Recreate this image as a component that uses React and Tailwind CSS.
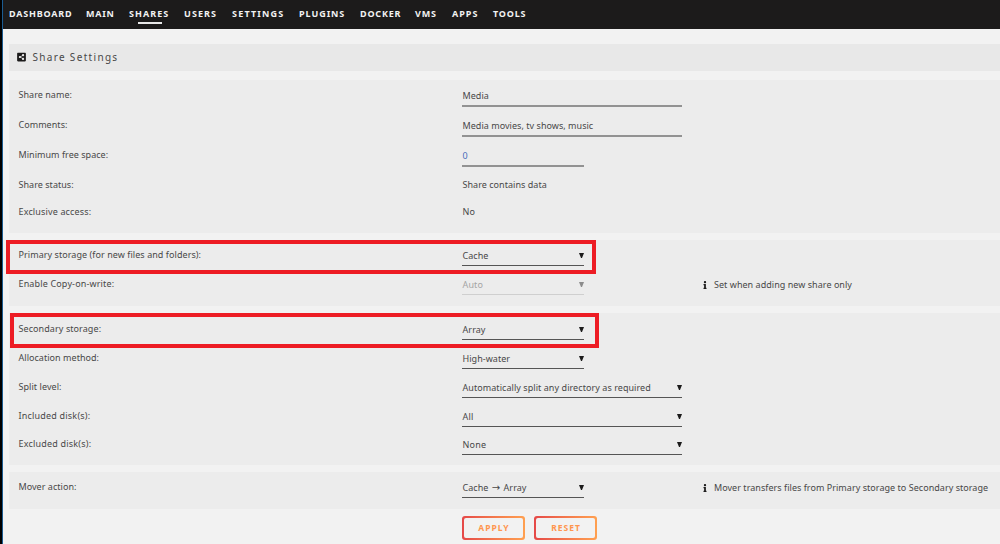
import React from "react";
import { FaShareAltSquare, FaInfo } from "react-icons/fa";

const navItems = [
  { name: "DASHBOARD", className: "w-[77px]" },
  { name: "MAIN", className: "w-[43px]" },
  { name: "SHARES", className: "w-[55px] tracking-[1.05px]", active: true },
  { name: "USERS", className: "w-[48px] tracking-[1.1px]" },
  { name: "SETTINGS", className: "w-[67px] tracking-[1.2px]" },
  { name: "PLUGINS", className: "w-[61px] tracking-[0.95px]" },
  { name: "DOCKER", className: "w-[55px]" },
  { name: "VMS", className: "w-[37px]" },
  { name: "APPS", className: "w-[41px] tracking-[1px]" },
  { name: "TOOLS", className: "w-[40px]" },
];

const Panel = ({ className, children }) => (
  <section className={`relative bg-[#ececec] ${className}`}>{children}</section>
);

const Row = ({ label, className, children, help }) => (
  <div className={`flex items-start pl-[9.5px] ${className}`}>
    <div className="w-[443.5px] shrink-0 leading-[20px]">{label}</div>
    <div className="w-[240px] shrink-0">{children}</div>
    {help && (
      <div className="flex items-center leading-[21px] whitespace-nowrap tracking-[0.04px]">
        <FaInfo className="w-[6px] h-[8px] mr-[6px] text-[#1c1b1b]" />
        <span>{help}</span>
      </div>
    )}
  </div>
);

const Field = ({ value, wide }) => (
  <div
    className={`h-[22px] border-b-2 border-[#929292] pl-[0.5px] leading-[21px] ${wide ? "w-[220px]" : "w-[122px]"}`}
  >
    {value}
  </div>
);

const Select = ({ value, wide, disabled }) => (
  <div
    className={`flex items-start justify-between h-[21px] border-b pl-[0.5px] leading-[21px] ${wide ? "w-[220px]" : "w-[122px]"} ${
      disabled ? "border-[#cfcfcf] text-[#a5a5a5]" : "border-[#555]"
    }`}
  >
    <span>{value}</span>
    <svg
      viewBox="0 0 5 5"
      className={`w-[5px] h-[5px] mt-[8px] ${disabled ? "fill-[#8c8c8c]" : "fill-[#1c1b1b]"}`}
    >
      <path d="M0 0h5L3 5H2z" />
    </svg>
  </div>
);

const Highlight = ({ className }) => (
  <div className={`absolute border-4 border-[#ed1c24] pointer-events-none ${className}`} />
);

const Button = ({ children }) => (
  <button className="w-[63px] h-[24px] rounded-[3px] p-[2px] bg-gradient-to-r from-[#e54848] to-[#ffa050]">
    <span className="flex items-center justify-center w-full h-full rounded-[2px] bg-[#f2f2f2] pl-[1px] text-[8.5px] font-bold tracking-[1px] text-[#ff964f]">
      {children}
    </span>
  </button>
);

const App = () => {
  return (
    <div className="flex w-[1000px] h-[544px] overflow-hidden bg-[#f2f2f2] font-['Noto_Sans',sans-serif] text-[9px] tracking-[0.04px] text-[#484848]">
      <div className="w-[3px] shrink-0 bg-black border-r border-[#1b5c91]" />
      <div className="flex-1 min-w-0">
        <nav className="flex h-[29px] pl-[6px] bg-[#1c1b1b] text-[#f2f2f2] text-[9px] font-bold tracking-[0.8px]">
          {navItems.map((item) => (
            <a key={item.name} className={`shrink-0 pt-[4px] leading-[20px] ${item.className}`}>
              {item.name}
              {item.active && <div className="w-[24px] h-[2px] -mt-[2px] ml-[9px] bg-[#e8e8e8]" />}
            </a>
          ))}
        </nav>

        <main className="pl-[6px] pt-[15px]">
          <header className="flex items-center h-[27px] pl-[7.5px] bg-[#e8e8e8]">
            <FaShareAltSquare className="w-[9px] h-[10px] -mt-px text-[#1c1b1b]" />
            <h1 className="ml-[7px] text-[10px] tracking-[1.32px]">Share Settings</h1>
          </header>

          <Panel className="mt-[9px] h-[153px] pt-[5px]">
            <Row label="Share name:" className="h-[30px]">
              <Field value="Media" wide />
            </Row>
            <Row label="Comments:" className="h-[30px]">
              <Field value="Media movies, tv shows, music" wide />
            </Row>
            <Row label="Minimum free space:" className="h-[30px]">
              <Field value={<span className="text-[#486dba]">0</span>} />
            </Row>
            <Row label="Share status:" className="h-[27px] leading-[20px]">
              <span className="pl-[0.5px]">Share contains data</span>
            </Row>
            <Row label="Exclusive access:" className="h-[28px] leading-[20px] tracking-[0.15px]">
              <span className="pl-[0.5px]">No</span>
            </Row>
          </Panel>

          <Panel className="mt-[7px] h-[66px] pt-[5px]">
            <Row label="Primary storage (for new files and folders):" className="h-[29px] tracking-[0.06px]">
              <Select value="Cache" />
            </Row>
            <Row label="Enable Copy-on-write:" className="h-[29px] tracking-[0.15px]" help="Set when adding new share only">
              <Select value="Auto" disabled />
            </Row>
            <Highlight className="left-[-3px] top-0 w-[590px] h-[34px]" />
          </Panel>

          <Panel className="mt-[7px] h-[152px] pt-[6px]">
            <Row label="Secondary storage:" className="h-[29px] tracking-[0.08px]">
              <Select value="Array" />
            </Row>
            <Row label="Allocation method:" className="h-[29px]">
              <Select value="High-water" />
            </Row>
            <Row label="Split level:" className="h-[29px] tracking-[0.06px]">
              <Select value="Automatically split any directory as required" wide />
            </Row>
            <Row label="Included disk(s):" className="h-[28px] tracking-[0.2px]">
              <Select value="All" wide />
            </Row>
            <Row label="Excluded disk(s):" className="h-[28px] tracking-[0.2px]">
              <Select value="None" wide />
            </Row>
            <Highlight className="left-[1px] top-0 w-[589px] h-[35px]" />
          </Panel>

          <Panel className="mt-[7px] h-[37px] pt-[5px]">
            <Row
              label="Mover action:"
              className="h-[29px]"
              help="Mover transfers files from Primary storage to Secondary storage"
            >
              <Select
                value={
                  <>
                    Cache <span className="mx-[1px] font-['DejaVu_Sans',sans-serif] text-[10px] leading-none">→</span> Array
                  </>
                }
              />
            </Row>
          </Panel>

          <div className="flex gap-[9px] pl-[453px] pt-[7px]">
            <Button>APPLY</Button>
            <Button>RESET</Button>
          </div>
        </main>
      </div>
    </div>
  );
};

export default App;
